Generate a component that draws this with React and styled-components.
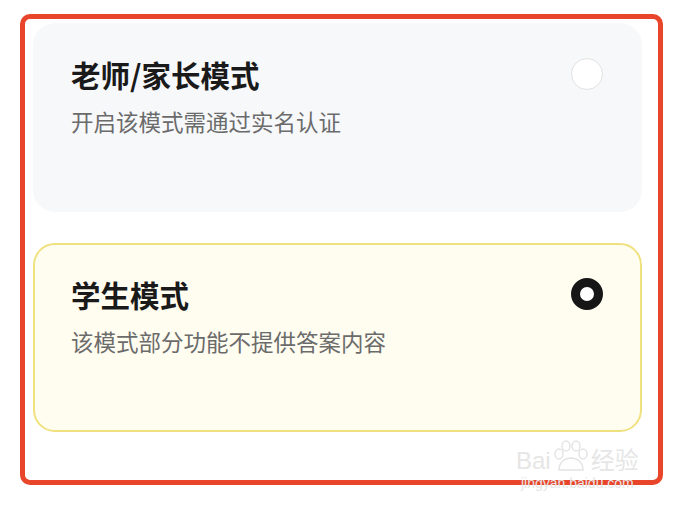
import React from 'react';
import styled, { createGlobalStyle } from 'styled-components';

/* Styles */
const GlobalStyle = createGlobalStyle`
  html, body {
    margin: 0;
    padding: 0;
    background: #ffffff;
    font-family: "Noto Sans CJK SC", "Noto Sans", sans-serif;
  }
`;

const Page = styled.div`
  width: 674px;
  height: 514px;
  padding: 14px 0 0 20px;
  box-sizing: border-box;
  position: relative;
`;

const Frame = styled.div`
  width: 643px;
  height: 471px;
  box-sizing: border-box;
  border: 5px solid #e9452b;
  border-radius: 10px;
  padding: 4px 16px 0 8px;
  display: flex;
  flex-direction: column;
  gap: 31px;
`;

const Card = styled.div`
  height: 189px;
  box-sizing: border-box;
  border-radius: 22px;
  padding: 31px 37px 0 36px;
  background: ${p => (p.selected ? '#fffcf0' : '#f7f8fa')};
  border: 2px solid ${p => (p.selected ? '#f0e17f' : 'transparent')};
  display: flex;
  flex-direction: column;
  gap: 14px;
`;

const Header = styled.div`
  display: flex;
  align-items: center;
  justify-content: space-between;
`;

const Title = styled.div`
  font-size: 29.5px;
  line-height: 36px;
  font-weight: 700;
  color: #1a1a1a;
`;

const Desc = styled.div`
  font-size: 22.5px;
  line-height: 30px;
  color: #6b6b6b;
`;

const Radio = styled.div`
  width: 32px;
  height: 32px;
  box-sizing: border-box;
  border-radius: 50%;
  background: #ffffff;
  border: ${p => (p.checked ? '9px solid #161616' : '1.5px solid #e2e2e2')};
`;

const Watermark = styled.div`
  position: absolute;
  left: 516px;
  top: 440px;
  display: flex;
  flex-direction: column;
  align-items: center;
  color: #e6e6e6;
  pointer-events: none;
`;

const MarkRow = styled.div`
  display: flex;
  align-items: flex-end;
  font-family: "Liberation Sans", "Noto Sans CJK SC", sans-serif;
  font-size: 24px;
  font-weight: 400;
  line-height: 26px;
`;

const MarkUrl = styled.div`
  font-family: "Liberation Sans", sans-serif;
  font-size: 14px;
  line-height: 18px;
`;

/* Component */
const modes = [
  { title: '老师/家长模式', desc: '开启该模式需通过实名认证', selected: false },
  { title: '学生模式', desc: '该模式部分功能不提供答案内容', selected: true }
];

const Paw = () => (
  <svg width="40" height="34" viewBox="0 0 40 34" fill="none" stroke="#e4e4e4" strokeWidth="1.5">
    <ellipse cx="8" cy="14" rx="4" ry="5" />
    <ellipse cx="15" cy="6" rx="4" ry="5" />
    <ellipse cx="25" cy="6" rx="4" ry="5" />
    <ellipse cx="32" cy="14" rx="4" ry="5" />
    <path d="M8 30 C8 22 14 18 20 18 C26 18 32 22 32 30 Z" />
  </svg>
);

export default function App() {
  return (
    <Page>
      <GlobalStyle />
      <Frame>
        {modes.map(m => (
          <Card key={m.title} selected={m.selected}>
            <Header>
              <Title>{m.title}</Title>
              <Radio checked={m.selected} />
            </Header>
            <Desc>{m.desc}</Desc>
          </Card>
        ))}
      </Frame>
      <Watermark>
        <MarkRow>
          <span>Bai</span>
          <Paw />
          <span>经验</span>
        </MarkRow>
        <MarkUrl>jingyan.baidu.com</MarkUrl>
      </Watermark>
    </Page>
  );
}
